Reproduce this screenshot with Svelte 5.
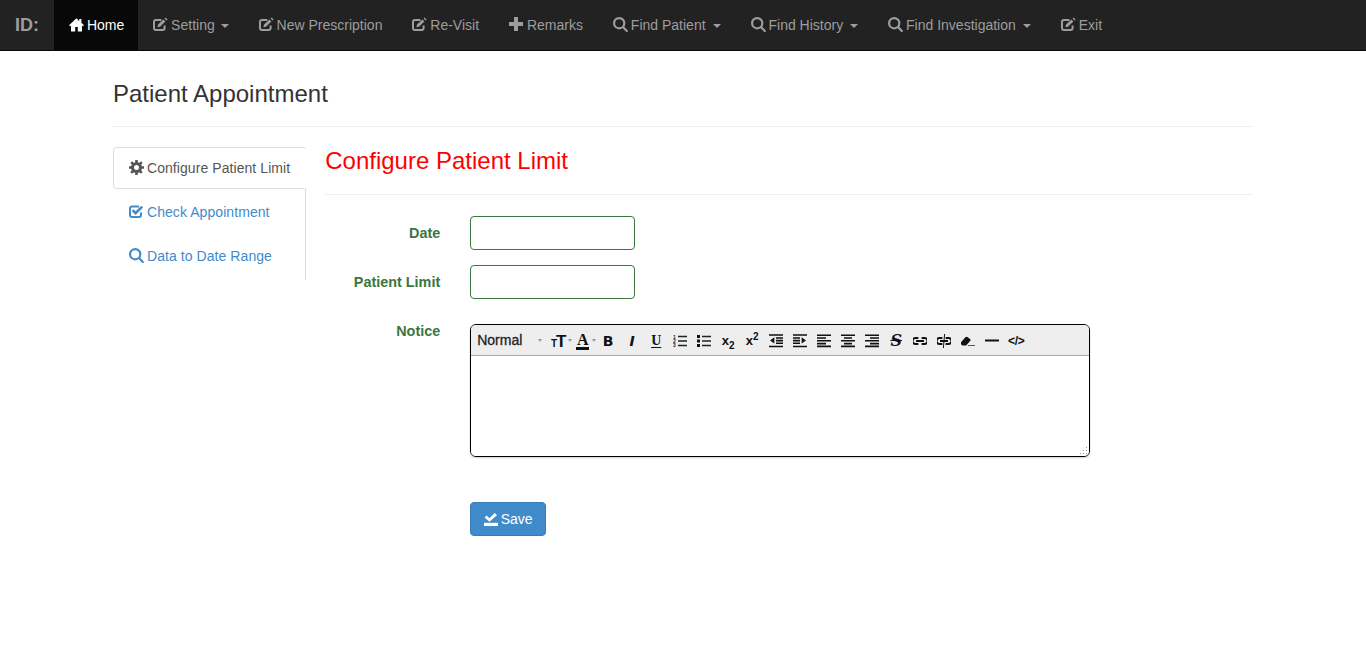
<script>
  const glyph = {
    home: 'M7.5 1.2 0 8.2l1 1.1L2 8.4V14.4h4.2V10h2.6v4.4H13V8.4l1 .9 1-1.1-2.6-2.4V2h-2.2v2.2Z',
    edit: 'M11.6 8.6V11a2 2 0 0 1-2 2H3a2 2 0 0 1-2-2V5a2 2 0 0 1 2-2h5.4',
    search: 'M6.2 1.1a5.1 5.1 0 1 0 0 10.2 5.1 5.1 0 0 0 0-10.2Z M10 10l3.8 3.9',
    plus: 'M5 0h4v5h5v4H9v5H5V9H0V5h5Z'
  };
  const nav = [
    { label: 'Setting', icon: 'edit', caret: true },
    { label: 'New Prescription', icon: 'edit' },
    { label: 'Re-Visit', icon: 'edit' },
    { label: 'Remarks', icon: 'plus' },
    { label: 'Find Patient', icon: 'search', caret: true, wide: true },
    { label: 'Find History', icon: 'search', caret: true, wide: true },
    { label: 'Find Investigation', icon: 'search', caret: true, wide: true },
    { label: 'Exit', icon: 'edit' }
  ];
  const tools = [
    'size', 'color', 'bold', 'italic', 'under', 'ol', 'ul', 'sub', 'sup', 'outdent', 'indent',
    'left', 'center', 'right', 'strike', 'link', 'unlink', 'eraser', 'rule', 'code'
  ];
</script>

{#snippet icon(name)}
  <svg class="ico" viewBox="0 0 15 15" width="15" height="15" aria-hidden="true">
    {#if name === 'edit'}
      <path d={glyph.edit} fill="none" stroke="currentColor" stroke-width="2" />
      <path d="M5 7.6 10.4 2.6l2 2L7 9.8l-2.6.4Z M11.6 1.6l1-1.1 2 2-1.1 1Z" fill="currentColor" />
    {:else if name === 'search'}
      <path d={glyph.search} fill="none" stroke="currentColor" stroke-width="2.2" stroke-linecap="round" />
    {:else if name === 'check'}
      <path d="M12 8.6V11a2 2 0 0 1-2 2H3a2 2 0 0 1-2-2V4.4a2 2 0 0 1 2-2h7" fill="none" stroke="currentColor" stroke-width="2" />
      <path d="M3.6 6.2 6.6 9.2l6.6-6.6" fill="none" stroke="currentColor" stroke-width="2.6" />
    {:else if name === 'gear'}
      <circle cx="7.5" cy="7.5" r="4" fill="none" stroke="currentColor" stroke-width="3" />
      <path d="M7.5 0v15M0 7.5h15M2.2 2.2l10.6 10.6M12.8 2.2 2.2 12.8" stroke="currentColor" stroke-width="2.6" stroke-dasharray="2.8 9.4" />
    {:else}
      <path d={glyph[name]} fill="currentColor" />
    {/if}
  </svg>
{/snippet}

{#snippet tool(name)}
  <span class="tool">
    {#if name === 'size'}
      <span class="t-size"><small>T</small>T</span><i class="mini"></i>
    {:else if name === 'color'}
      <span class="t-color">A</span><i class="mini"></i>
    {:else if name === 'bold'}
      <b class="t-bold">B</b>
    {:else if name === 'italic'}
      <b class="t-italic">I</b>
    {:else if name === 'under'}
      <span class="t-under">U</span>
    {:else if name === 'sub'}
      <b class="t-script">x<sub>2</sub></b>
    {:else if name === 'sup'}
      <b class="t-script">x<sup>2</sup></b>
    {:else if name === 'strike'}
      <b class="t-strike">S</b>
    {:else if name === 'code'}
      <b class="t-code">&lt;/&gt;</b>
    {:else}
      <svg viewBox="0 0 14 14" width="14" height="14" aria-hidden="true">
        {#if name === 'ol'}
          <text x="0" y="4.6" class="num">1</text><text x="0" y="9" class="num">2</text><text x="0" y="13.4" class="num">3</text>
          <path d="M5 2.5h9M5 7h9M5 11.5h9" stroke="#222" stroke-width="1.3" />
        {:else if name === 'ul'}
          <path d="M1.5 1v3M1.5 5.5v3M1.5 10v3" stroke="#111" stroke-width="3" />
          <path d="M5 2.5h9M5 7h9M5 11.5h9" stroke="#222" stroke-width="1.3" />
        {:else if name === 'outdent'}
          <path d="M0 1h14M7 4h7M7 6.6h7M7 9.2h7M0 12.5h14" stroke="#111" stroke-width="1.6" />
          <path d="M5.4 3.2v6.4L1 6.4Z" fill="#111" />
        {:else if name === 'indent'}
          <path d="M0 1h14M0 4h7M0 6.6h7M0 9.2h7M0 12.5h14" stroke="#111" stroke-width="1.6" />
          <path d="M8.6 3.2v6.4L13 6.4Z" fill="#111" />
        {:else if name === 'left'}
          <path d="M0 1.2h14M0 4h9M0 6.8h14M0 9.6h9M0 12.4h14" stroke="#111" stroke-width="1.6" />
        {:else if name === 'center'}
          <path d="M0 1.2h14M3 4h8M0 6.8h14M3 9.6h8M0 12.4h14" stroke="#111" stroke-width="1.6" />
        {:else if name === 'right'}
          <path d="M0 1.2h14M5 4h9M0 6.8h14M5 9.6h9M0 12.4h14" stroke="#111" stroke-width="1.6" />
        {:else if name === 'link' || name === 'unlink'}
          <g transform="translate(-2 0)">
            <path d="M7.4 4H4.6a3 3 0 0 0 0 6h2.8M10.6 4h2.8a3 3 0 0 1 0 6h-2.8M5 7h8" fill="none" stroke="#111" stroke-width="1.8" />
            {#if name === 'unlink'}<path d="M9.6 0 8.4 14" stroke="#111" stroke-width="1" />{/if}
          </g>
        {:else if name === 'eraser'}
          <path d="M-1 9.4 4.4 3.2a1.4 1.4 0 0 1 2-.1L9 5a1.4 1.4 0 0 1 .1 2L5.2 11.4H1.4Z" fill="#111" />
          <path d="M7 11.5h9" stroke="#555" stroke-width="1" />
        {:else if name === 'rule'}
          <path d="M0 6.5h14" stroke="#111" stroke-width="2" />
        {/if}
      </svg>
    {/if}
  </span>
{/snippet}

<nav class="navbar">
  <span class="brand">ID:</span>
  <a class="item active" href="#home">{@render icon('home')} Home</a>
  {#each nav as n}
    <a class="item" class:wide={n.wide} href="#item">{@render icon(n.icon)} {n.label}{#if n.caret}<i class="caret"></i>{/if}</a>
  {/each}
</nav>

<main class="container">
  <h3 class="page-title">Patient Appointment</h3>
  <hr />
  <div class="columns">
    <ul class="tabs">
      <li class="on"><a href="#a">{@render icon('gear')} Configure Patient Limit</a></li>
      <li><a href="#b">{@render icon('check')} Check Appointment</a></li>
      <li><a href="#c">{@render icon('search')} Data to Date Range</a></li>
    </ul>
    <section class="pane">
      <h3 class="pane-title">Configure Patient Limit</h3>
      <hr />
      <form class="form">
        <label for="d">Date</label>
        <input id="d" type="text" />
        <label for="p">Patient Limit</label>
        <input id="p" type="text" />
        <label for="n">Notice</label>
        <div class="editor" id="n">
          <div class="toolbar">
            <span class="format">Normal<i class="mini"></i></span>
            {#each tools as t}
              {@render tool(t)}
            {/each}
          </div>
          <div class="area">
            <svg class="grip" viewBox="0 0 9 9" width="9" height="9" aria-hidden="true">
              <path d="M7 1h1v1H7ZM4 4h1v1H4ZM7 4h1v1H7ZM1 7h1v1H1ZM4 7h1v1H4ZM7 7h1v1H7Z" fill="#999" />
            </svg>
          </div>
        </div>
        <div class="actions">
          <button type="button" class="save">
            <svg class="ico" viewBox="0 0 14 14" width="14" height="14" aria-hidden="true">
              <path d="M2.6 3.6 5.4 6.2 10.8 1l2.2 2.2-7.6 6.6L.6 5.6Z" fill="#fff" />
              <path d="M0 10.8h14V14H0Z" fill="#fff" />
            </svg>
            Save
          </button>
        </div>
      </form>
    </section>
  </div>
</main>

<style>
  :global(body) {
    font-family: "Liberation Sans", Arial, sans-serif;
    font-size: 14px;
    line-height: 20px;
    color: #333;
    background: #fff;
  }
  a {
    text-decoration: none;
  }
  .navbar {
    display: flex;
    height: 50px;
    background: #222;
    border-bottom: 1px solid #080808;
  }
  .brand {
    width: 54px;
    box-sizing: border-box;
    padding: 15px;
    font-size: 18px;
    font-weight: bold;
    color: #9d9d9d;
  }
  .item {
    padding: 15px;
    color: #9d9d9d;
    white-space: nowrap;
  }
  .item.active {
    padding-right: 14px;
    background: #080808;
    color: #fff;
  }
  .ico {
    vertical-align: -2px;
    margin-right: -1px;
  }
  .caret {
    display: inline-block;
    margin-left: 6px;
    vertical-align: middle;
    border-top: 4px solid;
    border-left: 4px solid transparent;
    border-right: 4px solid transparent;
  }
  .item.wide .caret {
    margin-left: 7px;
  }
  .container {
    width: 1140px;
    margin: 0 auto;
  }
  .page-title {
    margin: 0;
    padding-top: 30px;
    font-size: 24px;
    line-height: 26px;
    font-weight: 500;
  }
  hr {
    margin: 19px 0 20px;
    border: 0;
    border-top: 1px solid #eee;
  }
  .columns {
    display: flex;
    gap: 19px;
  }
  .tabs {
    flex: 0 0 193px;
    box-sizing: border-box;
    height: 133px;
    margin: 0;
    padding: 0;
    list-style: none;
    border-right: 1px solid #ddd;
  }
  .tabs li {
    margin-bottom: 2px;
  }
  .tabs a {
    display: block;
    height: 42px;
    box-sizing: border-box;
    padding: 10px 15px;
    border: 1px solid transparent;
    border-radius: 4px 0 0 4px;
    color: #428bca;
    margin-right: -1px;
    white-space: nowrap;
    letter-spacing: 0.07px;
  }
  .tabs .on a {
    color: #555;
    background: #fff;
    border-color: #ddd;
    border-right-color: #fff;
  }
  .pane {
    flex: 1;
  }
  .pane-title {
    margin: 0;
    padding-top: 1px;
    font-size: 24px;
    line-height: 26px;
    font-weight: 500;
    color: #f00;
  }
  .pane hr {
    margin: 20px 0 21px;
  }
  .form {
    display: grid;
    grid-template-columns: 115px 620px;
    column-gap: 30px;
    row-gap: 15px;
  }
  label {
    padding-top: 7px;
    text-align: right;
    font-size: 14.4px;
    font-weight: bold;
    color: #3c763d;
  }
  input {
    width: 165px;
    height: 34px;
    box-sizing: border-box;
    padding: 6px 12px;
    border: 1px solid #3c763d;
    border-radius: 4px;
    font: inherit;
  }
  .editor {
    margin-top: 10px;
    height: 133px;
    box-sizing: border-box;
    border: 1px solid #000;
    border-radius: 6px;
    box-shadow: 0 1px 2px rgba(0, 0, 0, 0.2);
    overflow: hidden;
  }
  .toolbar {
    display: flex;
    align-items: center;
    height: 31px;
    padding-left: 6px;
    padding-top: 2px;
    box-sizing: border-box;
    background: #eee;
    border-bottom: 1px solid #aaa;
    color: #111;
  }
  .format {
    position: relative;
    width: 71px;
    flex: none;
    font-size: 14px;
    font-weight: 500;
    -webkit-text-stroke: 0.3px #222;
    color: #222;
    margin-top: -2px;
  }
  .format .mini {
    right: 6px;
    top: 9px;
  }
  .mini {
    position: absolute;
    border-top: 3px solid #999;
    border-left: 2.5px solid transparent;
    border-right: 2.5px solid transparent;
  }
  .tool {
    position: relative;
    flex: 0 0 24px;
    height: 20px;
    display: flex;
    align-items: center;
    justify-content: center;
    font-size: 14px;
    line-height: 1;
  }
  .tool .mini {
    right: 0;
    top: 8px;
  }
  .t-size {
    font-weight: bold;
    font-size: 17px;
    margin-left: -4px;
    letter-spacing: -1px;
  }
  .t-size small {
    font-size: 10px;
  }
  .t-color {
    font-family: "Liberation Serif", serif;
    font-weight: bold;
    font-size: 16px;
    border-bottom: 3px solid #111;
    margin-left: -3px;
    padding: 0 1px;
    line-height: 14px;
  }
  .t-bold {
    font-family: "DejaVu Sans", sans-serif;
    font-weight: 900;
    font-size: 14px;
  }
  .t-italic {
    font-style: italic;
    font-family: "DejaVu Sans", sans-serif;
    font-size: 14px;
  }
  .t-under {
    font-family: "Liberation Serif", serif;
    font-weight: bold;
    font-size: 14px;
    text-decoration: underline;
    text-underline-offset: 2px;
  }
  .t-script {
    font-size: 13px;
    line-height: 14px;
  }
  .t-script sub,
  .t-script sup {
    font-size: 10px;
    line-height: 0;
  }
  .t-strike {
    font-family: "DejaVu Serif", serif;
    font-style: italic;
    font-size: 16px;
    text-decoration: line-through;
  }
  .t-code {
    font-size: 12px;
    letter-spacing: -0.3px;
  }
  .num {
    font-size: 5px;
    font-weight: bold;
    fill: #222;
    font-family: "Liberation Sans", sans-serif;
  }
  .area {
    position: relative;
    height: 100px;
    background: #fff;
  }
  .grip {
    position: absolute;
    right: 1px;
    bottom: 1px;
  }
  .actions {
    grid-column: 2;
    margin-top: 30px;
  }
  .save {
    width: 76px;
    height: 34px;
    padding: 0;
    border: 1px solid #357ebd;
    border-radius: 4px;
    background: #428bca;
    color: #fff;
    font: inherit;
  }
</style>
